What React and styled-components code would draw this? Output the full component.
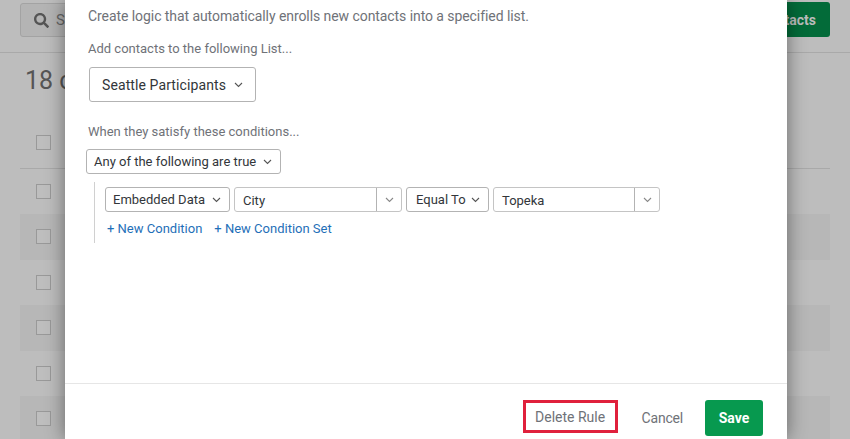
import React from 'react';
import styled, { createGlobalStyle } from 'styled-components';
import { FaSearch } from 'react-icons/fa';

const GlobalStyle = createGlobalStyle`
    html, body {
        margin: 0;
        padding: 0;
        height: 100%;
        overflow: hidden;
        background: #bdbdbd;
        font-family: "Roboto", "Liberation Sans", sans-serif;
    }
`

const Page = styled.div`
    width: 850px;
    height: 439px;
    overflow: hidden;
    position: relative;
    background: #bdbdbd;
`

const Toolbar = styled.div`
    height: 53px;
    box-sizing: border-box;
    padding: 3px 20px 0;
    display: flex;
    justify-content: space-between;
    align-items: flex-start;
    border-bottom: 1px solid #a9a9a9;
`

const SearchBox = styled.div`
    width: 300px;
    height: 34px;
    box-sizing: border-box;
    padding-left: 13px;
    display: flex;
    align-items: center;
    gap: 7px;
    border: 1px solid #a3a3a3;
    border-radius: 3px;
    background: #b4b4b4;
    color: #666;
    font-size: 15px;
`

const AddButton = styled.div`
    width: 140px;
    height: 35px;
    margin-top: -1px;
    box-sizing: border-box;
    padding-right: 14px;
    display: flex;
    align-items: center;
    justify-content: flex-end;
    border-radius: 3px;
    background: #036b39;
    color: #bcbcbc;
    font-size: 14px;
    font-weight: 700;
`

const Content = styled.div`
    padding: 0 20px;
`

const Count = styled.div`
    height: 64px;
    padding: 13px 0 0 5px;
    box-sizing: border-box;
    color: #555;
    font-size: 25px;
    line-height: 30px;
`

const HeadRow = styled.div`
    height: 52px;
    box-sizing: border-box;
    padding: 18px 0 0 16px;
    border-bottom: 1px solid #a9a9a9;
`

const Row = styled.div`
    height: 45.4px;
    box-sizing: border-box;
    padding: 15px 0 0 16px;
    background: ${props => (props.$striped ? '#b7b7b7' : 'transparent')};
`

const CheckBox = styled.div`
    width: 15px;
    height: 15px;
    box-sizing: border-box;
    border: 1px solid #999;
    background: #bebebe;
`

const Modal = styled.div`
    position: absolute;
    top: 0;
    left: 65px;
    width: 722px;
    height: 439px;
    display: flex;
    flex-direction: column;
    background: #fff;
    box-shadow: 0 0 18px rgba(0, 0, 0, 0.45);
`

const ModalBody = styled.div`
    flex: 1;
    padding: 8px 21px 0;
    display: flex;
    flex-direction: column;
    align-items: flex-start;
`

const Intro = styled.div`
    color: #6f7278;
    font-size: 14px;
    line-height: 17px;
    letter-spacing: -0.07px;
    margin-left: 2px;
`

const Label = styled.div`
    color: #6f7278;
    font-size: 13px;
    line-height: 17px;
    margin-top: ${props => props.$top}px;
    margin-left: 2px;
`

const ListSelect = styled.div`
    width: 167px;
    height: 35px;
    margin: 10px 0 0 3px;
    padding: 0 12px;
    box-sizing: border-box;
    display: flex;
    align-items: center;
    justify-content: space-between;
    border: 1px solid #b3b3b3;
    border-radius: 3px;
    color: #32363a;
    font-size: 14px;
    letter-spacing: 0.1px;
`

const Select = styled.div`
    height: 25px;
    box-sizing: border-box;
    display: flex;
    align-items: center;
    justify-content: space-between;
    width: ${props => props.$width}px;
    margin-top: ${props => props.$top || 0}px;
    padding: 0 8px 0 ${props => props.$pad || 7}px;
    border: 1px solid #b3b3b3;
    border-radius: 3px;
    color: #32363a;
    font-size: 13px;
`

const ConditionGroup = styled.div`
    margin: 8px 0 0 8px;
    height: 61px;
    box-sizing: border-box;
    padding: 5px 0 0 10px;
    border-left: 1px solid #d0d0d0;
`

const ConditionRow = styled.div`
    display: flex;
    gap: 4px;
`

const Combo = styled.div`
    height: 25px;
    box-sizing: border-box;
    display: flex;
    width: ${props => props.$width}px;
    border: 1px solid #c4c4c4;
    border-radius: 3px;
    color: #32363a;
    font-size: 13px;
`

const ComboText = styled.div`
    flex: 1;
    padding: 1px 0 0 8px;
    line-height: 23px;
`

const ComboToggle = styled.div`
    width: 24px;
    display: flex;
    align-items: center;
    justify-content: center;
    border-left: 1px solid #b3b3b3;
`

const LinkRow = styled.div`
    display: flex;
    gap: 12px;
    padding: 9px 0 0 2px;
`

const AddLink = styled.a`
    color: #1f6fb8;
    font-size: 13px;
    line-height: 16px;
`

const Footer = styled.div`
    height: 56px;
    box-sizing: border-box;
    border-top: 1px solid #e6e6e6;
    padding: 16px 24px 0 0;
    display: flex;
    justify-content: flex-end;
    align-items: flex-start;
`

const DeleteButton = styled.div`
    width: 95px;
    height: 33px;
    box-sizing: border-box;
    display: flex;
    align-items: center;
    justify-content: center;
    border: 3px solid #e0203c;
    color: #6f7278;
    font-size: 14px;
`

const CancelButton = styled.div`
    margin: 0 22px 0 24px;
    height: 36px;
    line-height: 36px;
    color: #6f7278;
    font-size: 14px;
    letter-spacing: -0.2px;
`

const SaveButton = styled.div`
    width: 58px;
    height: 36px;
    display: flex;
    align-items: center;
    justify-content: center;
    border-radius: 3px;
    background: #07994f;
    color: #fff;
    font-size: 14px;
    font-weight: 700;
`

const Chevron = ({ color = '#555' }) => (
    <svg width="9" height="6" viewBox="0 0 9 6" fill="none">
        <path d="M1 1l3.5 3.5L8 1" stroke={color} strokeWidth="1.1" />
    </svg>
)

const rows = [false, true, false, true, false, true]

export default function App() {
    return (
        <Page>
            <GlobalStyle />
            <Toolbar>
                <SearchBox>
                    <FaSearch size={15} color="#555" />
                    Search
                </SearchBox>
                <AddButton>Add Contacts</AddButton>
            </Toolbar>
            <Content>
                <Count>18 contacts</Count>
                <HeadRow>
                    <CheckBox />
                </HeadRow>
                {rows.map((striped, i) => (
                    <Row key={i} $striped={striped}>
                        <CheckBox />
                    </Row>
                ))}
            </Content>
            <Modal>
                <ModalBody>
                    <Intro>Create logic that automatically enrolls new contacts into a specified list.</Intro>
                    <Label $top={15}>Add contacts to the following List...</Label>
                    <ListSelect>
                        Seattle Participants
                        <Chevron />
                    </ListSelect>
                    <Label $top={21}>When they satisfy these conditions...</Label>
                    <Select $width={195} $top={9}>
                        Any of the following are true
                        <Chevron />
                    </Select>
                    <ConditionGroup>
                        <ConditionRow>
                            <Select $width={125}>
                                Embedded Data
                                <Chevron />
                            </Select>
                            <Combo $width={168}>
                                <ComboText>City</ComboText>
                                <ComboToggle>
                                    <Chevron color="#888" />
                                </ComboToggle>
                            </Combo>
                            <Select $width={83} $pad={9}>
                                Equal To
                                <Chevron />
                            </Select>
                            <Combo $width={167}>
                                <ComboText>Topeka</ComboText>
                                <ComboToggle>
                                    <Chevron color="#888" />
                                </ComboToggle>
                            </Combo>
                        </ConditionRow>
                        <LinkRow>
                            <AddLink>+ New Condition</AddLink>
                            <AddLink>+ New Condition Set</AddLink>
                        </LinkRow>
                    </ConditionGroup>
                </ModalBody>
                <Footer>
                    <DeleteButton>Delete Rule</DeleteButton>
                    <CancelButton>Cancel</CancelButton>
                    <SaveButton>Save</SaveButton>
                </Footer>
            </Modal>
        </Page>
    );
}
